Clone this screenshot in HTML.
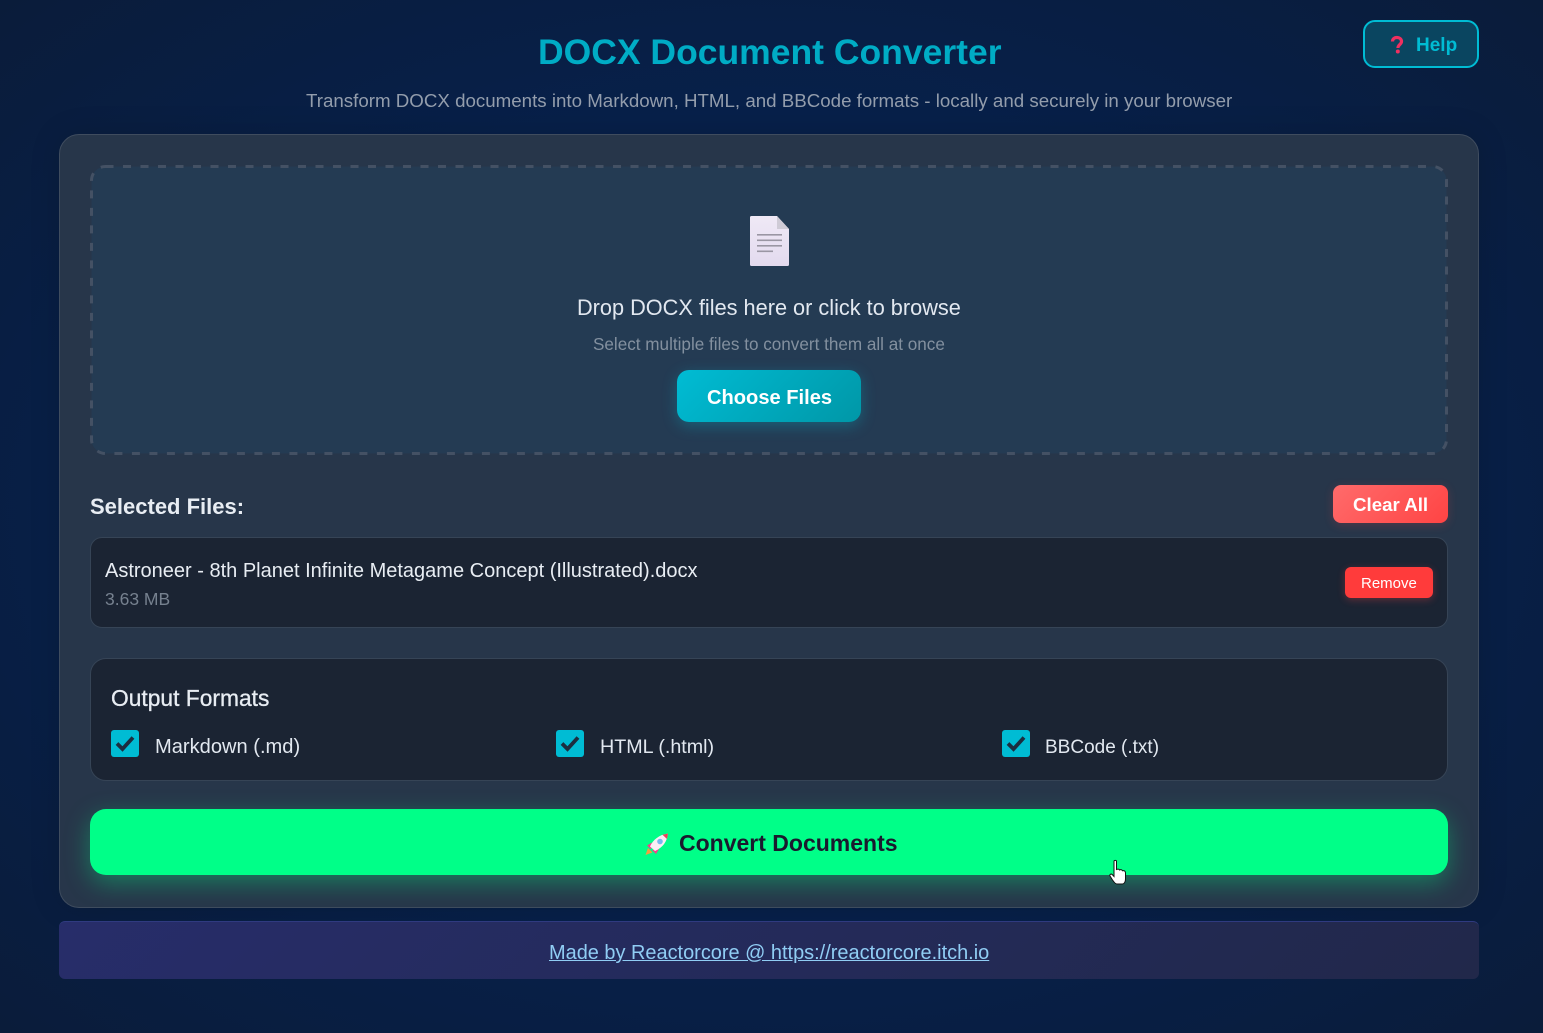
<!DOCTYPE html>
<html><head><meta charset="utf-8"><style>
html,body{margin:0;padding:0;width:1543px;height:1033px;overflow:hidden}
body{position:relative;background:radial-gradient(ellipse at 50% 50%,#062350 0%,#07204a 55%,#0a1c3a 100%);font-family:"Liberation Sans",sans-serif}
.t{position:absolute;white-space:nowrap;line-height:1}
.b{position:absolute;box-sizing:border-box}
</style></head><body>
<div class="t" style="left:538px;top:35px;font-size:35.500px;font-weight:700;color:#00acc5">DOCX Document Converter</div>
<div class="t" style="left:306px;top:92px;font-size:18.730px;color:#939dac">Transform DOCX documents into Markdown, HTML, and BBCode formats - locally and securely in your browser</div>
<div class="b" style="left:1363px;top:20px;width:116px;height:48px;border:2px solid #00bcd4;border-radius:12px;background:#0a4560"></div>
<svg class="b" style="left:1389px;top:35px" width="16" height="20" viewBox="0 0 16 20"><path d="M3.500 6.500C3.500 3.500 5.800 2.500 8 2.500s4.500 1.300 4.500 4c0 3-3.600 3.200-3.600 6.500" fill="none" stroke="#ef3060" stroke-width="3.200"/><circle cx="8.800" cy="16.500" r="2" fill="#ef3060"/></svg>
<div class="t" style="left:1416px;top:36px;font-size:19px;font-weight:700;color:#00bcd4">Help</div>

<div class="b" style="left:59px;top:134px;width:1420px;height:774px;border:1px solid #3f4c5e;border-radius:20px;background:#27364a;box-shadow:0 0 30px rgba(0,0,0,.15)"></div>
<svg class="b" style="left:90px;top:165px" width="1358" height="290"><rect x="1.500" y="1.500" width="1355" height="287" rx="14" fill="#243b53" stroke="#445164" stroke-width="3" stroke-dasharray="8 9.500"/></svg>
<svg class="b" style="left:750px;top:216px" width="40" height="50" viewBox="0 0 40 50"><defs><linearGradient id="d" x1="0" y1="0" x2="0" y2="1"><stop offset="0" stop-color="#efe9f6"/><stop offset="1" stop-color="#e3daee"/></linearGradient></defs><path d="M1.500 0H27L39 13V48.500A1.500 1.500 0 0 1 37.500 50H1.500A1.500 1.500 0 0 1 0 48.500V1.500A1.500 1.500 0 0 1 1.500 0Z" fill="url(#d)"/><path d="M27 0L39 13H27Z" fill="#cfcbd6"/><g fill="#9a96a3"><rect x="7" y="18" width="25" height="1.600"/><rect x="7" y="23.500" width="25" height="1.600"/><rect x="7" y="29" width="25" height="1.600"/><rect x="7" y="34.500" width="16" height="1.600"/></g></svg>
<div class="t" style="left:577px;top:297px;font-size:21.720px;color:#e2e8f0">Drop DOCX files here or click to browse</div>
<div class="t" style="left:593px;top:336px;font-size:17.130px;color:#83909f">Select multiple files to convert them all at once</div>
<div class="b" style="left:677px;top:370px;width:184px;height:52px;border-radius:12px;background:linear-gradient(135deg,#00bcd4,#0097a7);box-shadow:0 4px 15px rgba(0,188,212,.3)"></div>
<div class="t" style="left:707px;top:388px;font-size:20.100px;font-weight:700;color:#fff">Choose Files</div>

<div class="t" style="left:90px;top:496px;font-size:22px;font-weight:700;color:#e8edf3">Selected Files:</div>
<div class="b" style="left:1333px;top:485px;width:115px;height:38px;border-radius:8px;background:linear-gradient(135deg,#ff6b6b,#ff4444);box-shadow:0 2px 10px rgba(255,68,68,.2)"></div>
<div class="t" style="left:1353px;top:496px;font-size:18.700px;font-weight:700;color:#fff">Clear All</div>
<div class="b" style="left:90px;top:537px;width:1358px;height:91px;border:1px solid #364456;border-radius:12px;background:#1b2433"></div>
<div class="t" style="left:105px;top:561px;font-size:20px;color:#e8edf3">Astroneer - 8th Planet Infinite Metagame Concept (Illustrated).docx</div>
<div class="t" style="left:105px;top:591px;font-size:17.500px;color:#76818f">3.63 MB</div>
<div class="b" style="left:1345px;top:567px;width:88px;height:31px;border-radius:6px;background:#ff3b3b;box-shadow:0 2px 8px rgba(255,68,68,.3)"></div>
<div class="t" style="left:1361px;top:576px;font-size:15px;color:#fff">Remove</div>

<div class="b" style="left:90px;top:658px;width:1358px;height:123px;border:1px solid #364456;border-radius:16px;background:#1b2433"></div>
<div class="t" style="left:111px;top:687px;font-size:22.800px;color:#e8edf3;-webkit-text-stroke:.3px #e8edf3">Output Formats</div>
<svg class="b" style="left:111px;top:730px" width="28" height="27" viewBox="0 0 28 27"><rect width="28" height="27" rx="3" fill="#00bcd4"/><path d="M6 13.500L11.500 19L22 7.500" fill="none" stroke="#1c2e40" stroke-width="3.800"/></svg>
<div class="t" style="left:155px;top:737px;font-size:20.100px;color:#e2e8f0">Markdown (.md)</div>
<svg class="b" style="left:556px;top:730px" width="28" height="27" viewBox="0 0 28 27"><rect width="28" height="27" rx="3" fill="#00bcd4"/><path d="M6 13.500L11.500 19L22 7.500" fill="none" stroke="#1c2e40" stroke-width="3.800"/></svg>
<div class="t" style="left:600px;top:738px;font-size:19.700px;color:#e2e8f0">HTML (.html)</div>
<svg class="b" style="left:1002px;top:730px" width="28" height="27" viewBox="0 0 28 27"><rect width="28" height="27" rx="3" fill="#00bcd4"/><path d="M6 13.500L11.500 19L22 7.500" fill="none" stroke="#1c2e40" stroke-width="3.800"/></svg>
<div class="t" style="left:1045px;top:738px;font-size:19px;color:#e2e8f0">BBCode (.txt)</div>

<div class="b" style="left:90px;top:809px;width:1358px;height:66px;border-radius:16px;background:#00ff88;box-shadow:0 8px 25px rgba(0,255,136,.35)"></div>
<svg class="b" style="left:644px;top:831px" width="26" height="26" viewBox="0 0 26 26"><path d="M1.500 24l2.500-7 4.500 4.500z" fill="#f0a040"/><path d="M3 14.500l5-3-1 7zM12 23l3-5-7 1z" fill="#f5408a"/><path d="M6 15.500C9 8.500 15 4 24 2.500c-1 8-5 14-13 17.500z" fill="#fbeef5"/><path d="M18.500 3.800l5.500-1.300-1 5.500z" fill="#f0405a"/><circle cx="16" cy="10.500" r="2.800" fill="#78b8f0"/></svg>
<div class="t" style="left:679px;top:832px;font-size:23px;font-weight:700;color:#1a1a2e">Convert Documents</div>
<svg class="b" style="left:1109px;top:859px" width="18" height="27" viewBox="0 0 18 27"><path d="M5 2.500C5 1 7.500 1 7.500 2.500V10.500C9 9.800 10 10 10.500 11 12 10.300 13 10.800 13.500 11.800 15 11.300 16.500 12 16.500 14V20C16.500 23 15 25 13.500 25H8C6 25 5 23 3.500 21L1 17C.3 15.500 2 14.500 3.200 15.500L5 17.500Z" fill="#fff" stroke="#111" stroke-width="1"/></svg>

<div class="b" style="left:59px;top:921px;width:1420px;height:58px;border-radius:6px;background:linear-gradient(135deg,#272d6a,#21284a);border-top:1px solid #2f3a80"></div>
<div class="t" style="left:549px;top:944px;font-size:19.950px;color:#90cdf4;text-decoration:underline">Made by Reactorcore @ https://reactorcore.itch.io</div>
</body></html>
